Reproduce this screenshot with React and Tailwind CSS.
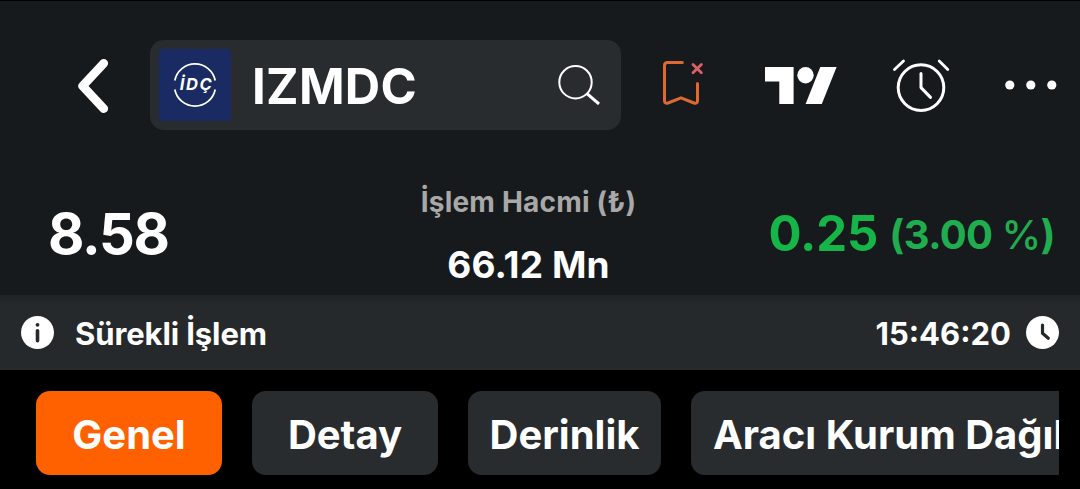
import React, { useState } from 'react';

const tabs = [
  { id: 'genel', label: 'Genel', width: 'w-[186px]' },
  { id: 'detay', label: 'Detay', width: 'w-[186px]' },
  { id: 'derinlik', label: 'Derinlik', width: 'w-[193px]' },
  { id: 'araci', label: 'Aracı Kurum Dağılımı', width: 'w-[450px]' },
];

function BackIcon() {
  return (
    <svg className="h-[56px] w-[32px]" viewBox="0 0 32 56" fill="none" stroke="white" strokeWidth="8.6" strokeLinecap="round" strokeLinejoin="round">
      <path d="M26.8 5.3 5.6 28 26.8 50.7" />
    </svg>
  );
}

function CompanyLogo() {
  return (
    <svg className="size-[72px]" viewBox="0 0 72 72">
      <rect width="72" height="72" rx="4" fill="#1a2b63" />
      <g fill="none" stroke="white" strokeWidth="1.7">
        <path d="M15.8 31.5A20.6 20.6 0 0 1 56.2 31.5" />
        <path d="M15.8 40.5A20.6 20.6 0 0 0 56.2 40.5" />
      </g>
      <text x="36.8" y="41.4" fill="white" textAnchor="middle" textLength="32" fontFamily="Inter, sans-serif" fontSize="16.5" fontWeight="700" fontStyle="italic">
        İDÇ
      </text>
    </svg>
  );
}

function SearchIcon() {
  return (
    <svg className="h-[40px] w-[43px]" viewBox="0 0 43 40" fill="none" stroke="white">
      <circle cx="17.5" cy="17.2" r="16.2" strokeWidth="2" />
      <path d="M29 28.6 41 39" strokeWidth="3" />
    </svg>
  );
}

function BookmarkRemoveIcon() {
  return (
    <svg className="h-[46px] w-[42px]" viewBox="0 0 42 46" fill="none" strokeLinecap="round" strokeLinejoin="round">
      <path d="M20.3 2.5H5.5Q2.5 2.5 2.5 5.5V40.5Q2.5 44 6 43L19 37.8 32 43Q35.5 44 35.5 40.5V23.5" stroke="#dc6a32" strokeWidth="3" />
      <path d="M31 4.4 39.4 12.8M39.4 4.4 31 12.8" stroke="#dd5f66" strokeWidth="2.8" />
    </svg>
  );
}

function TradingViewIcon() {
  return (
    <svg className="h-[37px] w-[72px]" viewBox="0 0 72 37" fill="white">
      <path d="M0 0H28.6V37H14.3V14.4H0Z" />
      <circle cx="40.5" cy="8.2" r="8.2" />
      <path d="M55.3 0H71.6L56.8 37H40.6Z" />
    </svg>
  );
}

function AlarmIcon() {
  return (
    <svg className="h-[54px] w-[58px]" viewBox="0 0 58 54" fill="none" stroke="white" strokeWidth="3" strokeLinecap="round" strokeLinejoin="round">
      <circle cx="29" cy="29.6" r="22.8" />
      <path d="M29 15.4V29.6L38.5 39.4" />
      <path d="M2.5 11.6 11.5 3M47.2 3 55.8 11.6" strokeWidth="2.8" />
    </svg>
  );
}

function MoreIcon() {
  return (
    <svg className="h-[10px] w-[52px]" viewBox="0 0 52 10" fill="white">
      <circle cx="4.8" cy="5" r="4.6" />
      <circle cx="25.8" cy="5" r="4.6" />
      <circle cx="46.8" cy="5" r="4.6" />
    </svg>
  );
}

function InfoIcon() {
  return (
    <svg className="size-[33px]" viewBox="0 0 33 33">
      <circle cx="16.5" cy="16.5" r="16.5" fill="white" />
      <circle cx="16.5" cy="8.8" r="1.9" fill="#26292c" />
      <path d="M16.5 14.8V24.8" stroke="#26292c" strokeWidth="3.6" strokeLinecap="round" />
    </svg>
  );
}

function ClockIcon() {
  return (
    <svg className="size-[33px]" viewBox="0 0 33 33">
      <circle cx="16.5" cy="16.5" r="16.5" fill="white" />
      <path d="M16.5 9V17.3L22.3 22.3" fill="none" stroke="#26292c" strokeWidth="3.2" strokeLinecap="round" strokeLinejoin="round" />
    </svg>
  );
}

export default function App() {
  const [activeTab, setActiveTab] = useState('genel');

  return (
    <div className="flex h-[489px] w-[1080px] flex-col overflow-hidden bg-black font-['Inter',sans-serif] font-bold whitespace-nowrap text-white">
      <div className="h-[295px] border-t border-black bg-[#171a1d]">
        {/* Top bar */}
        <header className="mt-[39px] flex h-[90px] items-center pl-[77px]">
          <button aria-label="Geri" className="mt-[2px]">
            <BackIcon />
          </button>
          <div className="ml-[41px] flex h-[90px] w-[471px] items-center rounded-[14px] bg-[#292c2f] pr-[20px] pl-[9px]">
            <CompanyLogo />
            <span className="mt-[2px] ml-[21px] flex-1 text-[49px] leading-none tracking-[0.3px]">IZMDC</span>
            <SearchIcon />
          </div>
          <button aria-label="Listeden çıkar" className="-mt-[4px] ml-[41px]">
            <BookmarkRemoveIcon />
          </button>
          <button aria-label="Grafik" className="ml-[61px]">
            <TradingViewIcon />
          </button>
          <button aria-label="Alarm" className="ml-[55px]">
            <AlarmIcon />
          </button>
          <button aria-label="Diğer" className="ml-[55px]">
            <MoreIcon />
          </button>
        </header>

        {/* Price summary */}
        <section className="mt-[50px] grid h-[110px] grid-cols-[360px_337px_1fr]">
          <div className="pt-[26px] pl-[48px] text-[56px] leading-none tracking-[-1.3px]">8.58</div>
          <div className="flex flex-col items-center pt-[5px]">
            <div className="text-[28px] leading-[34px] tracking-[0.2px] text-[#a8a8a8]">İşlem Hacmi (₺)</div>
            <div className="mt-[24px] text-[37px] leading-[44px] tracking-[0.1px]">66.12 Mn</div>
          </div>
          <div className="flex items-baseline justify-end pt-[29px] pr-[25px] text-[49px] leading-none text-[#15b548]">
            <span className="tracking-[-0.1px]">0.25</span>
            <span className="ml-[11px] -translate-y-[2px] text-[40px] leading-none tracking-[-0.6px] text-[#20ad50]">
              (3.00 <span className="font-medium">%</span>)
            </span>
          </div>
        </section>
      </div>

      {/* Session status */}
      <div className="flex h-[75px] items-center bg-linear-to-b from-[#202326] to-[#26292c] to-15% pr-[21px] pl-[21px] text-[31px]">
        <InfoIcon />
        <span className="mt-[3px] ml-[21px] tracking-[-0.1px]">Sürekli İşlem</span>
        <span className="mt-[3px] mr-[15px] ml-auto">15:46:20</span>
        <ClockIcon />
      </div>

      <nav className="mr-[21px] ml-[36px] flex flex-1 gap-[30px] overflow-hidden pt-[21px]">
        {tabs.map((tab) => (
          <button
            key={tab.id}
            onClick={() => setActiveTab(tab.id)}
            className={`flex h-[84px] shrink-0 items-center rounded-[14px] pt-[3px] text-[40px] ${tab.width} ${
              tab.id === 'araci' ? 'pl-[22px]' : 'justify-center'
            } ${activeTab === tab.id ? 'bg-[#ff6100]' : 'bg-[#292c2f]'}`}
          >
            {tab.label}
          </button>
        ))}
      </nav>
    </div>
  );
}
